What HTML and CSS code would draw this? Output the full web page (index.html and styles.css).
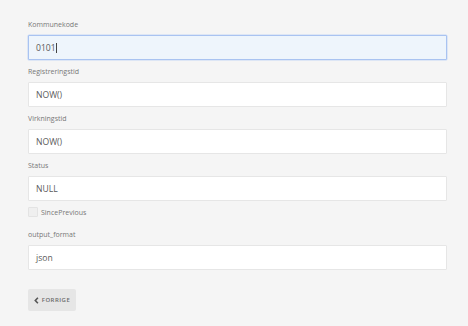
FILE: index.html
```html
<!DOCTYPE html>
<html>
<head>
<meta charset="utf-8">
<link rel="stylesheet" href="styles.css">
</head>
<body>
<form class="form">
  <div class="field">
    <label class="label">Kommunekode</label>
    <div class="input focused"><span>0101</span><span class="caret"></span></div>
  </div>
  <div class="field">
    <label class="label">Registreringstid</label>
    <div class="input"><span>NOW()</span></div>
  </div>
  <div class="field">
    <label class="label">Virkningstid</label>
    <div class="input"><span>NOW()</span></div>
  </div>
  <div class="field">
    <label class="label">Status</label>
    <div class="input"><span>NULL</span></div>
  </div>
  <div class="check-row">
    <span class="checkbox"></span>
    <span class="check-label">SincePrevious</span>
  </div>
  <div class="field">
    <label class="label">output_format</label>
    <div class="input"><span>json</span></div>
  </div>
  <div class="actions">
    <button type="button" class="btn">
      <svg class="chev" width="5" height="7" viewBox="0 0 5 7"><path d="M3.9 0.8 L1.3 3.5 L3.9 6.2" fill="none" stroke="#555" stroke-width="1.6"/></svg>
      <span>FORRIGE</span>
    </button>
  </div>
</form>
</body>
</html>
```
FILE: styles.css
```css
html, body {
  margin: 0;
  padding: 0;
  background: #f5f5f5;
}
body {
  font-family: "Open Sans", "Noto Sans", sans-serif;
  width: 468px;
  height: 326px;
  overflow: hidden;
}
.form {
  padding: 19px 0 0 28px;
  width: 419px;
  display: flex;
  flex-direction: column;
}
.field {
  display: flex;
  flex-direction: column;
  margin-bottom: 6px;
}
.label {
  font-size: 7px;
  line-height: 12px;
  height: 12px;
  color: #777;
  margin-bottom: 4px;
}
.input {
  box-sizing: border-box;
  height: 25px;
  background: #fff;
  border: 1px solid #e6e6e6;
  border-radius: 1px;
  display: flex;
  align-items: center;
  padding-left: 7px;
  font-size: 8.6px;
  color: #5a5a5a;
}
.input.focused {
  background: #eef5fc;
  border: 1px solid #a9c3f1;
  box-shadow: 0 0 0 0.5px #c6d8f6;
}
.caret {
  display: inline-block;
  width: 1px;
  height: 10px;
  background: #444;
  margin-left: 0.5px;
}
.check-row {
  display: flex;
  align-items: center;
  height: 12px;
  margin-top: -1px;
  margin-bottom: 11px;
}
.checkbox {
  box-sizing: border-box;
  width: 10px;
  height: 10px;
  border: 1px solid #e3e3e3;
  background: #efefef;
  border-radius: 1px;
  margin-right: 3px;
}
.check-label {
  font-size: 7px;
  color: #777;
}
.actions {
  margin-top: 13px;
  display: flex;
}
.btn {
  box-sizing: border-box;
  width: 48px;
  height: 22px;
  border: none;
  border-radius: 2px;
  background: #e6e6e6;
  display: flex;
  align-items: center;
  justify-content: center;
  gap: 3px;
  padding: 0;
  font-family: "Open Sans", "Noto Sans", sans-serif;
  font-size: 6px;
  font-weight: 600;
  letter-spacing: 0.5px;
  color: #6a6a6a;
}
.chev {
  display: block;
}
```
